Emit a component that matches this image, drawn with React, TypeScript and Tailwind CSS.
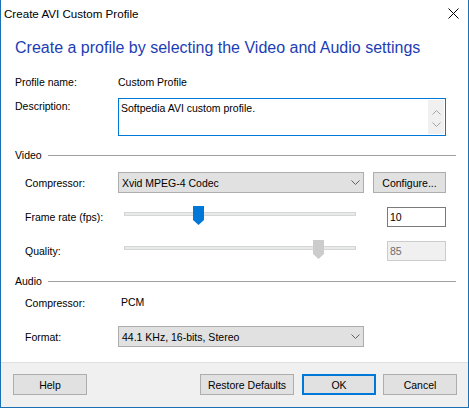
import React from 'react';

const Chevron = ({ up = false, color = '#606060' }: { up?: boolean; color?: string }) => (
  <svg width="9" height="5" viewBox="0 0 9 5" className="block">
    <path d={up ? 'M0.5 4.5 L4.5 0.5 L8.5 4.5' : 'M0.5 0.5 L4.5 4.5 L8.5 0.5'} fill="none" stroke={color} strokeWidth="1" />
  </svg>
);

const Thumb = ({ color }: { color: string }) => (
  <svg width="11" height="19" viewBox="0 0 11 19" className="block">
    <polygon points="0,0 11,0 11,14 5.5,19 0,14" fill={color} />
  </svg>
);

const SectionHeader = ({ title, className = '' }: { title: string; className?: string }) => (
  <div className={`flex items-center h-[16px] ${className}`}>
    <span>{title}</span>
    <div className="flex-1 ml-[6px] h-px bg-[#a0a0a0]" />
  </div>
);

const Dropdown = ({ value }: { value: string }) => (
  <div className="w-[246px] h-[21px] flex items-center justify-between bg-[#e1e1e1] border border-[#adadad] pl-[3px] pr-[3px]">
    <span>{value}</span>
    <Chevron />
  </div>
);

const Slider = ({ pos, disabled = false }: { pos: number; disabled?: boolean }) => (
  <div className="relative w-[246px] h-[20px]">
    <div className="absolute left-[6px] top-[5px] w-[232px] h-[4px] bg-[#e7eaea] border border-[#d6d6d6]" />
    <div className="absolute top-[-1px]" style={{ left: pos }}>
      <Thumb color={disabled ? '#cccccc' : '#0078d7'} />
    </div>
  </div>
);

const DialogButton = ({
  label,
  width,
  primary = false,
  className = '',
}: {
  label: string;
  width: string;
  primary?: boolean;
  className?: string;
}) => (
  <button
    className={`${width} h-[21px] flex items-center justify-center bg-[#e1e1e1] ${
      primary ? 'border-2 border-[#0078d7]' : 'border border-[#adadad]'
    } ${className}`}
  >
    {label}
  </button>
);

export default function App() {
  return (
    <div
      className="w-[469px] h-[408px] flex flex-col bg-white border-x border-b border-[#1b6fb5] text-black text-[10.5px] leading-[16px]"
      style={{ fontFamily: '"Liberation Sans", Arial, sans-serif' }}
    >
      {/* Title bar */}
      <div className="h-[27px] flex items-center justify-between pl-[3px] pr-[9px] text-[11.6px]">
        <span>Create AVI Custom Profile</span>
        <svg width="11" height="11" viewBox="0 0 11 11" className="block">
          <path d="M0.5 0.5 L10.5 10.5 M10.5 0.5 L0.5 10.5" stroke="#000" strokeWidth="1" />
        </svg>
      </div>

      {/* Body */}
      <div className="flex flex-col pl-[14px] pr-[12px]">
        <h1 className="mt-[11px] text-[16px] leading-[20px] text-[#1c3db5]">
          Create a profile by selecting the Video and Audio settings
        </h1>

        <div className="mt-[16px] flex">
          <span className="w-[103px]">Profile name:</span>
          <span>Custom Profile</span>
        </div>

        <div className="mt-[8px] flex">
          <span className="w-[103px]">Description:</span>
          <div className="w-[328px] h-[38px] flex border border-[#0078d7]">
            <span className="flex-1 pl-[2px] pt-[1px]">Softpedia AVI custom profile.</span>
            <div className="w-[16px] my-[1px] mr-[1px] bg-[#f0f0f0] flex flex-col items-center justify-between pt-[10px] pb-[7px]">
              <Chevron up color="#a3a3a3" />
              <Chevron color="#a3a3a3" />
            </div>
          </div>
        </div>

        <SectionHeader title="Video" className="mt-[11px]" />

        <div className="pl-[10px] flex flex-col">
          <div className="mt-[9px] flex items-center">
            <span className="w-[93px]">Compressor:</span>
            <Dropdown value="Xvid MPEG-4 Codec" />
            <DialogButton label="Configure..." width="w-[73px]" className="ml-[9px]" />
          </div>

          <div className="mt-[14px] flex items-center">
            <span className="w-[93px]">Frame rate (fps):</span>
            <Slider pos={75} />
            <div className="ml-[23px] w-[59px] h-[20px] flex items-center border border-[#7a7a7a] pl-[2px]">10</div>
          </div>

          <div className="mt-[14px] flex items-center">
            <span className="w-[93px]">Quality:</span>
            <Slider pos={195} disabled />
            <div className="ml-[23px] w-[59px] h-[20px] flex items-center border border-[#cccccc] bg-[#f0f0f0] text-[#6d6d6d] pl-[2px]">
              85
            </div>
          </div>
        </div>

        <SectionHeader title="Audio" className="mt-[12px]" />

        <div className="pl-[10px] flex flex-col">
          <div className="mt-[6px] flex">
            <span className="w-[93px]">Compressor:</span>
            <span className="pl-[3px] -mt-[1px]">PCM</span>
          </div>

          <div className="mt-[15px] flex items-center">
            <span className="w-[93px]">Format:</span>
            <Dropdown value="44.1 KHz, 16-bits, Stereo" />
          </div>
        </div>
      </div>

      <div className="flex-1" />

      {/* Footer */}
      <div className="h-[45px] flex items-start pt-[11px] pl-[12px] pr-[11px] bg-[#f0f0f0] border-t border-[#dfdfdf]">
        <DialogButton label="Help" width="w-[74px]" />
        <div className="flex-1" />
        <DialogButton label="Restore Defaults" width="w-[94px]" />
        <DialogButton label="OK" width="w-[74px]" primary className="ml-[8px]" />
        <DialogButton label="Cancel" width="w-[74px]" className="ml-[7px]" />
      </div>
    </div>
  );
}
